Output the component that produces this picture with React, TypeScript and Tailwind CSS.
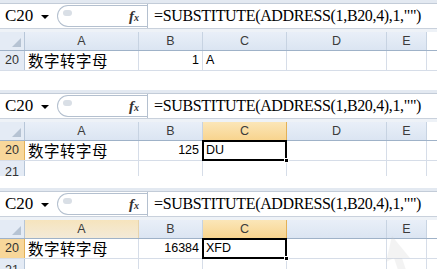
import React from "react";

type Col = { key: string; w: string };

const COLS: Col[] = [
  { key: "A", w: "w-[114px]" },
  { key: "B", w: "w-[64px]" },
  { key: "C", w: "w-[84px]" },
  { key: "D", w: "w-[100px]" },
  { key: "E", w: "w-[40px]" },
];

const FORMULA = '=SUBSTITUTE(ADDRESS(1,B20,4),1,"")';

function FormulaBar() {
  return (
    <>
      <div className="h-[4px] border-b border-[#c3ccd8] bg-[#e3e9f1]" />
      <div className="flex h-[25px] items-stretch border-b border-[#c9d1dc] bg-white">
        <div className="flex w-[54px] items-center pl-[5px] font-['Liberation_Serif',serif] text-[17px] text-black">
          C20
          <span className="ml-[8px] mt-[2px] h-0 w-0 border-l-[4px] border-r-[4px] border-t-[4px] border-l-transparent border-r-transparent border-t-black" />
        </div>
        <div className="flex w-[93px] items-center py-[1px] pl-[3px]">
          <div className="relative flex h-full flex-1 items-center justify-end rounded-l-full border-y border-l border-[#b4c0cf] bg-white pr-[8px]">
            <span className="absolute left-[5px] top-[4px] h-[6px] w-[9px] rounded-full bg-[#d9dfe6]" />
            <span className="font-['Liberation_Serif',serif] text-[15px] font-bold italic text-[#333]">
              f<span className="text-[10px]">x</span>
            </span>
          </div>
        </div>
        <div className="flex flex-1 items-center border-l border-[#b4c0cf] pl-[6px] font-['Liberation_Serif',serif] text-[16px] tracking-[-0.35px] whitespace-nowrap text-black">
          {FORMULA}
        </div>
      </div>
      <div className="h-[3px] bg-[#eef2f7]" />
    </>
  );
}

function HeaderRow({ hiA, hiC }: { hiA?: boolean; hiC?: boolean }) {
  return (
    <div className="flex h-[19px] border-b border-[#9fb2c8] font-['Liberation_Sans',sans-serif] text-[12.5px] text-[#3b3b3b]">
      <div className="relative w-[25px] border-r border-[#b7c6d8] bg-[#e4ebf5]">
        <svg className="absolute bottom-[3px] right-[3px]" width="9" height="9" viewBox="0 0 9 9">
          <polygon points="9,0 9,9 0,9" fill="#b6c3d3" />
        </svg>
      </div>
      {COLS.map((c) => {
        const hiStrong = c.key === "C" && hiC;
        const hiPale = c.key === "A" && hiA;
        return (
          <div
            key={c.key}
            className={`${c.w} flex items-center justify-center border-r ${
              hiStrong
                ? "border-[#e3b158] bg-gradient-to-b from-[#fbe6b8] to-[#f8d48e]"
                : hiPale
                  ? "border-[#e6d3ad] bg-gradient-to-b from-[#f6e4bd] to-[#f3ead8]"
                  : "border-[#c7d3e2] bg-gradient-to-b from-[#e9eff8] to-[#dbe5f2]"
            }`}
          >
            {c.key === "D" && hiA ? "" : c.key}
          </div>
        );
      })}
    </div>
  );
}

function DataRow({
  num,
  value,
  selected,
}: {
  num: string;
  value: string;
  selected?: boolean;
}) {
  return (
    <div className="flex h-[20px] border-b border-[#d6dde8] font-['Liberation_Sans',sans-serif] text-[12.5px] text-black">
      <div
        className={`flex w-[25px] items-center justify-center border-r ${
          selected ? "border-[#e3b158] bg-[#f8d79a]" : "border-[#b7c6d8] bg-[#e4ebf5]"
        } text-[12.5px] text-[#333]`}
      >
        20
      </div>
      <div className="flex w-[114px] items-center border-r border-[#d6dde8] pl-[3px] font-['Noto_Sans_CJK_SC',sans-serif] text-[15.5px] tracking-[0.5px]">
        数字转字母
      </div>
      <div className="flex w-[64px] items-center justify-end border-r border-[#d6dde8] pr-[3px]">{num}</div>
      <div className="relative flex w-[84px] items-center border-r border-[#d6dde8] pl-[3px]">
        {value}
        {selected && (
          <>
            <span className="absolute -left-[1px] -top-[1px] bottom-[-1px] right-[-1px] border-2 border-black" />
            <span className="absolute -bottom-[3px] -right-[3px] h-[5px] w-[5px] border border-white bg-black" />
          </>
        )}
      </div>
      <div className="w-[100px] border-r border-[#d6dde8]" />
      <div className="w-[40px] border-r border-[#d6dde8]" />
    </div>
  );
}

function Row21() {
  return (
    <div className="flex h-[20px] font-['Liberation_Sans',sans-serif] text-[12.5px] text-[#333]">
      <div className="flex w-[25px] items-start justify-center border-r border-[#b7c6d8] bg-[#e4ebf5] pt-[2px]">21</div>
      <div className="w-[114px] border-r border-[#d6dde8]" />
      <div className="w-[64px] border-r border-[#d6dde8]" />
      <div className="w-[84px] border-r border-[#d6dde8]" />
      <div className="w-[100px] border-r border-[#d6dde8]" />
      <div className="w-[40px] border-r border-[#d6dde8]" />
    </div>
  );
}

export default function App() {
  return (
    <div className="h-[269px] w-[437px] overflow-hidden bg-white">
      <div className="h-[73px] overflow-hidden">
        <FormulaBar />
        <HeaderRow />
        <DataRow num="1" value="A" />
      </div>
      <div className="h-[17px]" />
      <div className="h-[86px] overflow-hidden">
        <FormulaBar />
        <HeaderRow hiC />
        <DataRow num="125" value="DU" selected />
        <Row21 />
      </div>
      <div className="h-[12px]" />
      <div className="relative h-[81px] overflow-hidden">
        <FormulaBar />
        <HeaderRow hiA hiC />
        <DataRow num="16384" value="XFD" selected />
        <Row21 />
        <svg className="absolute left-[384px] top-[48px] opacity-20" width="30" height="34" viewBox="0 0 30 34">
          <polygon points="8,0 26,22 18,22 22,34 14,34 10,22 2,26" fill="#c8c8c8" />
        </svg>
      </div>
    </div>
  );
}
